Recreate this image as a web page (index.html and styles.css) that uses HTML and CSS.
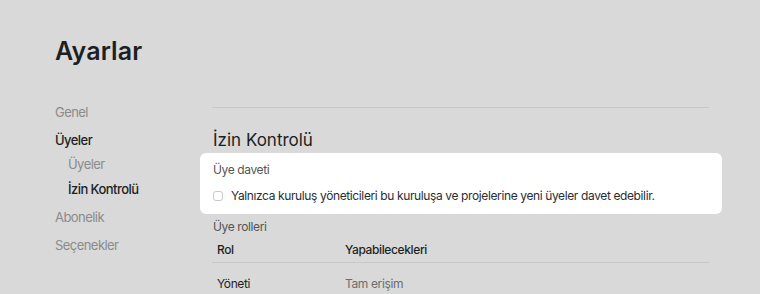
FILE: index.html
```html
<!DOCTYPE html>
<html lang="tr">
<head>
<meta charset="utf-8">
<title>Ayarlar</title>
<link rel="stylesheet" href="styles.css">
</head>
<body>
<div class="page">
  <h1 class="title">Ayarlar</h1>
  <div class="layout">
    <nav class="sidebar">
      <a class="nav-item">Genel</a>
      <a class="nav-item active">Üyeler</a>
      <div class="subnav">
        <a class="sub-item">Üyeler</a>
        <a class="sub-item active">İzin Kontrolü</a>
      </div>
      <a class="nav-item">Abonelik</a>
      <a class="nav-item">Seçenekler</a>
    </nav>
    <main class="content">
      <hr class="divider">
      <h2 class="section-title">İzin Kontrolü</h2>
      <div class="card">
        <div class="card-label">Üye daveti</div>
        <label class="check-row">
          <span class="checkbox"></span>
          <span>Yalnızca kuruluş yöneticileri bu kuruluşa ve projelerine yeni üyeler davet edebilir.</span>
        </label>
      </div>
      <div class="group-label">Üye rolleri</div>
      <table class="roles">
        <thead>
          <tr><th class="col-role">Rol</th><th>Yapabilecekleri</th></tr>
        </thead>
        <tbody>
          <tr><td class="col-role">Yöneti</td><td class="muted">Tam erişim</td></tr>
        </tbody>
      </table>
    </main>
  </div>
</div>
</body>
</html>
```
FILE: styles.css
```css
* { box-sizing: border-box; }
html, body { margin: 0; padding: 0; }
body {
  background: #d9d9d9;
  font-family: Inter, "Noto Sans", sans-serif;
  color: #1c1f24;
  height: 294px;
  overflow: hidden;
}
.page {
  padding: 36px 0 0 55px;
}
.title {
  margin: 0;
  font-size: 25px;
  font-weight: 600;
  line-height: 30px;
  letter-spacing: 0.1px;
}
.layout {
  display: flex;
  margin-top: 38px;
}
.sidebar {
  width: 157px;
  display: flex;
  flex-direction: column;
  font-size: 13px;
  letter-spacing: -0.55px;
}
.nav-item {
  line-height: 16px;
  color: #8b8b8b;
}
.nav-item + .nav-item, .subnav + .nav-item { margin-top: 12px; }
.nav-item.active { color: #1c1f24; font-weight: 500; }
.subnav {
  display: flex;
  flex-direction: column;
  padding-left: 13px;
  margin-top: 8px;
}
.sub-item {
  line-height: 16px;
  color: #8b8b8b;
}
.sub-item + .sub-item { margin-top: 9px; }
.sub-item.active { color: #1c1f24; font-weight: 500; }
.content {
  width: 497px;
}
.divider {
  border: 0;
  border-top: 1px solid #c8c8c8;
  margin: 3px 0 0;
}
.section-title {
  margin: 20px 0 0 1px;
  font-size: 17px;
  font-weight: 400;
  line-height: 24px;
}
.card {
  background: #fff;
  border-radius: 6px;
  margin: 1px -13px 0 -12px;
  padding: 9px 13px 10px 13px;
  font-size: 12px;
  letter-spacing: -0.38px;
}
.card-label {
  color: #555;
  line-height: 16px;
}
.check-row {
  display: flex;
  align-items: center;
  gap: 8px;
  margin-top: 10px;
  line-height: 16px;
  color: #2a2d33;
}
.checkbox {
  width: 10px;
  height: 10px;
  border: 1px solid #c9c9c9;
  border-radius: 3px;
  background: #fff;
  flex: none;
}
.group-label {
  margin: 5px 0 0 1px;
  font-size: 12px;
  letter-spacing: -0.38px;
  color: #555;
  line-height: 16px;
}
.roles {
  width: 100%;
  border-collapse: collapse;
  font-size: 12px;
  letter-spacing: -0.38px;
  margin-top: 7px;
}
.roles th {
  text-align: left;
  font-weight: 500;
  padding: 0 5px 4px;
  line-height: 16px;
  border-bottom: 1px solid #c8c8c8;
}
.roles td {
  padding: 13px 5px 0;
  line-height: 16px;
}
.col-role { width: 128px; }
.muted { color: #6d6d6d; }
```
